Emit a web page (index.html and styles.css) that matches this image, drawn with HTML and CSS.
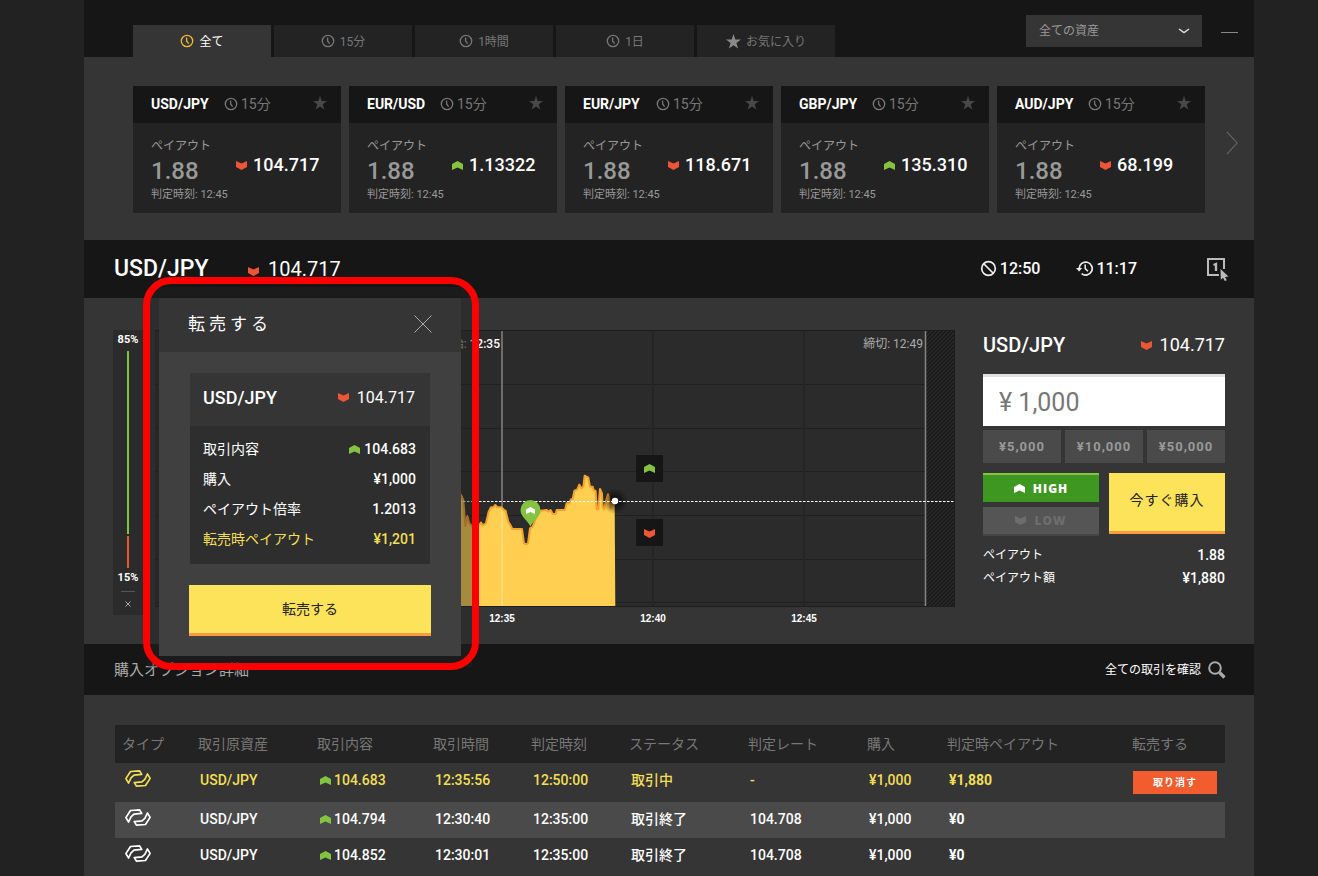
FILE: index.html
```html
<!DOCTYPE html>
<html lang="ja">
<head>
<meta charset="utf-8">
<meta name="viewport" content="width=device-width, initial-scale=1">
<title>USD/JPY 取引</title>
<link rel="stylesheet" href="styles.css">
</head>
<body>
<svg class="sprite" aria-hidden="true">
  <symbol id="up" viewBox="0 0 11 9"><path d="M0 3 5.5 0 11 3V9L5.5 6.5 0 9z"/></symbol>
  <symbol id="down" viewBox="0 0 11 9"><path d="M0 0 5.5 2.5 11 0V6L5.5 9 0 6z"/></symbol>
  <symbol id="clock" viewBox="0 0 14 14"><circle cx="7" cy="7" r="5.7" fill="none" stroke="currentColor" stroke-width="1.3"/><path d="M6.6 3.4V7L8.6 9.6" fill="none" stroke="currentColor" stroke-width="1.3"/></symbol>
  <symbol id="star" viewBox="0 0 14 14"><path d="M7 0 8.7 5.1H14L9.7 8.3 11.3 13.5 7 10.4 2.7 13.5 4.3 8.3 0 5.1H5.3z"/></symbol>
  <symbol id="option" viewBox="0 0 26 17"><path d="M3.600 13 .9 8.600 5.500 1.500 14.600.9 16.700 4.400 9 5.200 6 7.800zM22.400 4 25.100 8.400 20.500 15.500 11.400 16.100 9.300 12.600 17 11.800 20 9.200z" fill="none" stroke="currentColor" stroke-width="1.7" stroke-linejoin="round"/></symbol>
</svg>
<div class="page">
  <header class="topbar">
    <nav class="tabs">
      <button class="tab tab-active" type="button"><svg class="icon-clock"><use href="#clock"/></svg><span>全て</span></button>
      <button class="tab" type="button"><svg class="icon-clock"><use href="#clock"/></svg><span>15分</span></button>
      <button class="tab" type="button"><svg class="icon-clock"><use href="#clock"/></svg><span>1時間</span></button>
      <button class="tab" type="button"><svg class="icon-clock"><use href="#clock"/></svg><span>1日</span></button>
      <button class="tab" type="button"><svg class="icon-star"><use href="#star"/></svg><span>お気に入り</span></button>
    </nav>
    <div class="asset-filter">
      <select class="asset-select" aria-label="資産"><option>全ての資産</option></select>
      <svg class="asset-arrow" viewBox="0 0 12 6"><path d="M1 1 6 4.6 11 1" fill="none" stroke="#ddd" stroke-width="1.5"/></svg>
    </div>
    <button class="minimize" type="button" aria-label="最小化"></button>
  </header>

  <section class="strip">
    <article class="card">
      <div class="card-head"><h2 class="card-name">USD/JPY</h2><svg class="icon-clock"><use href="#clock"/></svg><span>15分</span><svg class="card-star"><use href="#star"/></svg></div>
      <div class="card-body"><div class="card-left"><p class="card-label">ペイアウト</p><p class="card-rate">1.88</p></div><p class="card-price"><svg class="mark down"><use href="#down"/></svg>104.717</p><p class="card-time">判定時刻: 12:45</p></div>
    </article>
    <article class="card">
      <div class="card-head"><h2 class="card-name">EUR/USD</h2><svg class="icon-clock"><use href="#clock"/></svg><span>15分</span><svg class="card-star"><use href="#star"/></svg></div>
      <div class="card-body"><div class="card-left"><p class="card-label">ペイアウト</p><p class="card-rate">1.88</p></div><p class="card-price"><svg class="mark up"><use href="#up"/></svg>1.13322</p><p class="card-time">判定時刻: 12:45</p></div>
    </article>
    <article class="card">
      <div class="card-head"><h2 class="card-name">EUR/JPY</h2><svg class="icon-clock"><use href="#clock"/></svg><span>15分</span><svg class="card-star"><use href="#star"/></svg></div>
      <div class="card-body"><div class="card-left"><p class="card-label">ペイアウト</p><p class="card-rate">1.88</p></div><p class="card-price"><svg class="mark down"><use href="#down"/></svg>118.671</p><p class="card-time">判定時刻: 12:45</p></div>
    </article>
    <article class="card">
      <div class="card-head"><h2 class="card-name">GBP/JPY</h2><svg class="icon-clock"><use href="#clock"/></svg><span>15分</span><svg class="card-star"><use href="#star"/></svg></div>
      <div class="card-body"><div class="card-left"><p class="card-label">ペイアウト</p><p class="card-rate">1.88</p></div><p class="card-price"><svg class="mark up"><use href="#up"/></svg>135.310</p><p class="card-time">判定時刻: 12:45</p></div>
    </article>
    <article class="card">
      <div class="card-head"><h2 class="card-name">AUD/JPY</h2><svg class="icon-clock"><use href="#clock"/></svg><span>15分</span><svg class="card-star"><use href="#star"/></svg></div>
      <div class="card-body"><div class="card-left"><p class="card-label">ペイアウト</p><p class="card-rate">1.88</p></div><p class="card-price"><svg class="mark down"><use href="#down"/></svg>68.199</p><p class="card-time">判定時刻: 12:45</p></div>
    </article>
    <button class="next" type="button" aria-label="次へ"><svg class="next-icon" viewBox="0 0 13 26"><path d="M1 1 12 13 1 25" fill="none" stroke="#666" stroke-width="1.2"/></svg></button>
  </section>

  <section class="titlebar">
    <h1 class="pair">USD/JPY</h1>
    <p class="pair-price"><svg class="mark down"><use href="#down"/></svg>104.717</p>
    <p class="time deadline"><svg class="time-icon" viewBox="0 0 17 17"><circle cx="8.5" cy="8.5" r="6.8" fill="none" stroke="#eee" stroke-width="1.7"/><path d="M4 4 13 13" stroke="#eee" stroke-width="1.7"/></svg>12:50</p>
    <p class="time"><svg class="time-icon" viewBox="0 0 17 17"><path d="M3.2 8.500A6.500 6.500 0 1 1 5.600 13.600" fill="none" stroke="#eee" stroke-width="1.7"/><path d="M0 8H6.2L3.1 11.6z" fill="#eee"/><path d="M9.2 4.6V8.600L12 11.200" fill="none" stroke="#eee" stroke-width="1.5"/></svg>11:17</p>
    <button class="oneclick" type="button" aria-label="ワンクリック"><svg class="oneclick-icon" viewBox="0 0 24 24"><path d="M18 12V2H2V18H13" fill="none" stroke="#bbb" stroke-width="2"/><path d="M7.500 8 10 7V14" fill="none" stroke="#bbb" stroke-width="2.300"/><path d="M14.500 12 22.500 19.500 19 20 20.800 23.200 18.800 24 17 20.800 14.800 22.800z" fill="#bbb"/></svg></button>
  </section>

  <section class="workspace">
    <aside class="sentiment">
      <span>85%</span><i class="bar-up"></i><i class="bar-down"></i><span>15%</span>
      <button class="sentiment-close" type="button" aria-label="閉じる"><svg class="sentiment-x" viewBox="0 0 6 6"><path d="M.5.5 5.5 5.5M5.5.5.5 5.5" stroke="#aaa"/></svg></button>
    </aside>
    <svg class="chart" viewBox="0 0 800 298" preserveAspectRatio="xMaxYMin slice" role="img" aria-label="USD/JPY チャート">
      <defs>
        <pattern id="hatch" width="4" height="4" patternUnits="userSpaceOnUse"><rect width="4" height="4" fill="#2a2a2a"/><path d="M-1 5 5-1M-1 1 1-1M3 5 5 3" stroke="#171717" stroke-width="1.3"/></pattern>
        <radialGradient id="glow"><stop offset="0" stop-color="#000" stop-opacity=".8"/><stop offset="1" stop-color="#000" stop-opacity="0"/></radialGradient>
      </defs>
      <rect width="800" height="277" fill="#2b2b2b"/>
      <path d="M0 54.500H800M0 98.500H800M0 141.500H800M0 185.500H800M0 229.500H800M0 272.500H800" stroke="#202020"/>
      <path d="M498 0V277M649 0V277" stroke="#252525" stroke-width="2"/>
      <rect x="771" width="29" height="277" fill="url(#hatch)"/>
      <path d="M0 .5H799.500V276.500H0" fill="none" stroke="#1d1d1d"/>
      <path d="M347 1V276" stroke="#858585" stroke-width="1.500"/>
      <g transform="translate(285 -20) scale(.3333)">
        <path d="M0 520 63 555 70 570 76 648 82 618 88 640 96 648 118 645 123 638 128 646 138 640 146 605 153 592 160 592 166 585 172 592 185 592 192 600 197 603 205 635 211 645 217 657 246 657 252 700 258 703 264 700 270 655 278 650 290 620 302 602 320 600 325 605 332 600 338 612 347 612 350 600 375 600 380 580 388 580 393 568 398 568 403 543 412 538 418 524 424 535 430 530 434 497 445 503 450 530 458 530 461 541 467 543 470 598 475 598 480 537 486 550 488 592 492 598 500 565 504 553 508 568 512 595 516 580 524 573 526 888H0z" fill="#fecf50"/>
        <path d="M0 520 63 555 70 570 76 648 82 618 88 640 96 648 118 645 123 638 128 646 138 640 146 605 153 592 160 592 166 585 172 592 185 592 192 600 197 603 205 635 211 645 217 657 246 657 252 700 258 703 264 700 270 655 278 650 290 620 302 602 320 600 325 605 332 600 338 612 347 612 350 600 375 600 380 580 388 580 393 568 398 568 403 543 412 538 418 524 424 535 430 530 434 497 445 503 450 530 458 530 461 541 467 543 470 598 475 598 480 537 486 550 488 592 492 598 500 565 504 553 508 568 512 595 516 580 524 573" fill="none" stroke="#f9a22b" stroke-width="6" stroke-linejoin="round"/>
      </g>
      <path d="M347 180V276" stroke="#ffde85" stroke-width="1.500"/>
      <path d="M770.500 1V276" stroke="#858585" stroke-width="1.500"/>
      <circle cx="460" cy="171" r="13" fill="url(#glow)"/>
      <path d="M20 171.500H800" stroke="#fff" stroke-dasharray="2.500 1.500"/>
      <circle cx="460" cy="171" r="3.200" fill="#fff"/>
      <path d="M375.500 196.500C372.500 190 365.500 187 365.500 180A10 10 0 0 1 385.500 180C385.500 187 378.500 190 375.500 196.500z" fill="#84c341"/>
      <path d="M371 179.500 375.500 177 380 179.500V184L375.500 182 371 184z" fill="#fff"/>
      <rect x="481" y="125" width="27" height="27" fill="#161616"/><use class="up" href="#up" x="489" y="134" width="11" height="9"/>
      <rect x="481" y="189" width="27" height="27" fill="#161616"/><use class="down" href="#down" x="489" y="199" width="11" height="9"/>
      <text class="chart-note" x="345" y="18" text-anchor="end">開始: <tspan class="chart-start">12:35</tspan></text>
      <text class="chart-note" x="768" y="18" text-anchor="end">締切: 12:49</text>
      <text class="tick" x="347" y="292">12:35</text><text class="tick" x="498" y="292">12:40</text><text class="tick" x="649" y="292">12:45</text>
    </svg>
    <form class="trade">
      <div class="trade-head"><h2 class="trade-name">USD/JPY</h2><p class="trade-price"><svg class="mark down"><use href="#down"/></svg>104.717</p></div>
      <input class="amount" type="text" value="¥ 1,000" aria-label="購入金額">
      <div class="quick"><button class="quick-btn" type="button">¥5,000</button><button class="quick-btn" type="button">¥10,000</button><button class="quick-btn" type="button">¥50,000</button></div>
      <div class="actions">
        <div class="direction">
          <button class="dir dir-high" type="button"><svg class="mark"><use href="#up"/></svg>HIGH</button>
          <button class="dir dir-low" type="button"><svg class="mark"><use href="#down"/></svg>LOW</button>
        </div>
        <button class="buy" type="button">今すぐ購入</button>
      </div>
      <dl class="payout"><div class="payout-row"><dt>ペイアウト</dt><dd>1.88</dd></div><div class="payout-row"><dt>ペイアウト額</dt><dd>¥1,880</dd></div></dl>
    </form>

    <div class="modal" role="dialog" aria-labelledby="resale-title">
      <div class="modal-head"><h2 class="modal-title" id="resale-title">転売する</h2><button class="modal-close" type="button" aria-label="閉じる"><svg class="modal-x" viewBox="0 0 18 18"><path d="M.5.5 17.500 17.500M17.500.5.5 17.500" stroke="#aaa"/></svg></button></div>
      <div class="modal-body">
        <div class="deal">
          <div class="deal-head"><h3 class="deal-name">USD/JPY</h3><p class="deal-price"><svg class="mark down"><use href="#down"/></svg>104.717</p></div>
          <dl class="deal-list">
            <div class="deal-row"><dt>取引内容</dt><dd><svg class="mark up"><use href="#up"/></svg>104.683</dd></div>
            <div class="deal-row"><dt>購入</dt><dd>¥1,000</dd></div>
            <div class="deal-row"><dt>ペイアウト倍率</dt><dd>1.2013</dd></div>
            <div class="deal-row deal-gold"><dt>転売時ペイアウト</dt><dd>¥1,201</dd></div>
          </dl>
        </div>
        <button class="resell" type="button">転売する</button>
      </div>
      <div class="highlight"></div>
    </div>
  </section>

  <section class="history-bar">
    <h2 class="history-title">購入オプション詳細</h2>
    <a class="history-link" href="#history">全ての取引を確認<svg class="search-icon" viewBox="0 0 18 18"><circle cx="7" cy="7" r="5.800" fill="none" stroke="#aaa" stroke-width="2"/><path d="M11.500 11.500 16.500 16.500" stroke="#aaa" stroke-width="3.200"/></svg></a>
  </section>

  <section class="history">
    <table class="trades" id="history">
      <colgroup><col class="w76"><col class="w119"><col class="w116"><col class="w98"><col class="w98"><col class="w119"><col class="w119"><col class="w80"><col class="w185"><col class="w100"></colgroup>
      <thead><tr><th>タイプ</th><th>取引原資産</th><th>取引内容</th><th>取引時間</th><th>判定時刻</th><th>ステータス</th><th>判定レート</th><th>購入</th><th>判定時ペイアウト</th><th>転売する</th></tr></thead>
      <tbody>
        <tr class="row-live"><td><svg class="type"><use href="#option"/></svg></td><td>USD/JPY</td><td><svg class="mark up"><use href="#up"/></svg>104.683</td><td>12:35:56</td><td>12:50:00</td><td>取引中</td><td>-</td><td>¥1,000</td><td class="strong">¥1,880</td><td><button class="cancel" type="button">取り消す</button></td></tr>
        <tr class="row-alt"><td><svg class="type"><use href="#option"/></svg></td><td>USD/JPY</td><td><svg class="mark up"><use href="#up"/></svg>104.794</td><td>12:30:40</td><td>12:35:00</td><td>取引終了</td><td>104.708</td><td>¥1,000</td><td class="strong">¥0</td><td></td></tr>
        <tr><td><svg class="type"><use href="#option"/></svg></td><td>USD/JPY</td><td><svg class="mark up"><use href="#up"/></svg>104.852</td><td>12:30:01</td><td>12:35:00</td><td>取引終了</td><td>104.708</td><td>¥1,000</td><td class="strong">¥0</td><td></td></tr>
      </tbody>
    </table>
  </section>
</div>
</body>
</html>
```
FILE: styles.css
```css
* { box-sizing: border-box; margin: 0; padding: 0; }
body { background: #222; color: #fff; font: 14px/20px Roboto, "Noto Sans CJK JP", sans-serif; }
button, input, select { font: inherit; color: inherit; border: 0; border-radius: 0; background: none; }
button { cursor: pointer; }
a { color: inherit; text-decoration: none; }
svg { display: block; flex: none; }
.sprite { display: none; }
.page { margin: 0 64px 0 84px; background: #353535; }
.mark { width: 11px; height: 9px; fill: currentColor; }
.up { fill: #84c341; }
.down { fill: #ee5535; }
.icon-clock { width: 14px; height: 14px; }
.icon-star { width: 15px; height: 15px; fill: #8a8a8a; }

.topbar { display: flex; align-items: flex-end; padding-left: 49px; height: 57px; background: #161616; }
.tabs { display: flex; gap: 3px; }
.tab { display: flex; align-items: center; justify-content: center; gap: 5px; width: 138px; height: 32px; background: #232323; color: #777; font-size: 12px; }
.tab span { padding-top: 2px; }
.tab-active { background: #353535; color: #fff; }
.tab-active .icon-clock { color: #f4b73b; }
.asset-filter { position: relative; margin: 0 19px 10px auto; }
.asset-select { appearance: none; display: block; width: 176px; height: 32px; padding: 0 13px; background: #353535; color: #999; font-size: 12px; }
.asset-arrow { position: absolute; right: 12px; top: 13px; width: 12px; height: 6px; }
.minimize { width: 17px; height: 1px; margin: 0 16px 24px 0; background: #888; }

.strip { display: flex; gap: 8px; padding: 29px 16px 27px 49px; }
.card { flex: 1; background: #232323; }
.card-head { display: flex; align-items: center; height: 37px; padding: 0 14px 1px 18px; background: #161616; color: #777; }
.card-head .icon-clock { margin-right: 3px; }
.card-name { width: 73px; color: #fff; font-size: 14px; font-weight: 700; }
.card-star { width: 14px; height: 14px; margin: 0 0 2px auto; fill: #484848; }
.card-body { display: grid; grid-template-columns: 85px 1fr; padding: 15px 0 11px 18px; }
.card-label { color: #999; font-size: 12px; line-height: 16px; }
.card-rate { padding-top: 3px; color: #999; font-size: 24px; font-weight: 500; line-height: 28px; }
.card-price { display: flex; align-items: center; gap: 6px; padding-top: 7px; font-size: 18px; font-weight: 500; }
.card-time { grid-column: 1 / -1; padding-top: 3px; color: #999; font-size: 11px; line-height: 14px; }
.next { width: 25px; padding: 0 0 13px 13px; }
.next-icon { width: 12px; height: 26px; }

.titlebar { display: flex; align-items: center; height: 58px; padding: 0 24px 0 30px; background: #161616; }
.pair { width: 134px; font-size: 23px; font-weight: 500; }
.pair-price { display: flex; align-items: center; gap: 9px; font-size: 20px; }
.pair-price .mark { margin-top: 4px; }
.time { display: flex; align-items: center; gap: 3px; margin-left: 36px; font-size: 16px; font-weight: 500; }
.deadline { margin-left: auto; }
.time-icon { width: 17px; height: 17px; margin-bottom: 2px; }
.oneclick { margin-left: 69px; }
.oneclick-icon { width: 24px; height: 24px; }

.workspace { position: relative; display: flex; padding: 32px 29px 16px; }
.sentiment { display: flex; flex-direction: column; align-items: center; flex: none; align-self: flex-start; width: 30px; height: 285px; margin-right: 12px; background: #2b2b2b; font-size: 11px; font-weight: 700; }
.bar-up, .bar-down { flex: 183; width: 2px; margin-top: 1px; background: #84c341; }
.bar-down { flex: 32; margin-top: 2px; background: #ee5535; }
.sentiment-close { width: 14px; height: 24px; margin-top: 3px; padding: 0 4px; border-top: 1px solid #555; }
.sentiment-x { width: 6px; height: 6px; }
.chart { flex: 1; min-width: 0; height: 298px; }
.chart-note { fill: #aaa; font-size: 12px; }
.chart-start { fill: #fff; font-weight: 500; }
.tick { fill: #fff; font: 700 10px "Liberation Sans", sans-serif; text-anchor: middle; }

.trade { flex: none; width: 242px; margin-left: 28px; }
.trade-head { display: flex; align-items: center; justify-content: space-between; height: 30px; margin-bottom: 14px; }
.trade-name { font-size: 20px; font-weight: 500; }
.trade-price { display: flex; align-items: center; gap: 8px; font-size: 18px; }
.amount { display: block; width: 100%; height: 52px; padding: 2px 16px 0; border-top: 3px solid #e0e0e0; background: #fff; color: #777; font-size: 25px; }
.quick { display: flex; gap: 4px; margin: 4px 0 10px; }
.quick-btn { flex: 1; height: 33px; background: #4a4a4a; color: #999; font-size: 13px; font-weight: 700; letter-spacing: 1px; }
.actions { display: grid; grid-template-columns: 1fr 1fr; gap: 10px; }
.direction { display: grid; gap: 5px; }
.dir { display: flex; align-items: center; justify-content: center; gap: 8px; height: 29px; font: 800 12px "Open Sans", sans-serif; letter-spacing: 1px; }
.dir-high { border-top: 2px solid #84c341; background: #3d9721; }
.dir-low { border-bottom: 2px solid #454545; background: #555; color: #6d6d6d; }
.buy { height: 61px; padding-bottom: 4px; border-bottom: 3px solid #fd9b41; background: #fde35a; color: #222; letter-spacing: 1px; }
.payout { padding-top: 8px; }
.payout-row { display: flex; justify-content: space-between; font-size: 12px; line-height: 23px; }
.payout-row dd { font-size: 14px; font-weight: 500; }

.modal { position: absolute; z-index: 1; top: 0; left: 75px; width: 302px; background: #404040; box-shadow: 0 0 0 11px rgba(34, 34, 34, .4); }
.modal-head { display: flex; align-items: center; justify-content: space-between; height: 54px; padding: 0 29px 2px; background: #353535; }
.modal-title { font-size: 17px; font-weight: 400; letter-spacing: 4px; }
.modal-x { width: 18px; height: 18px; }
.modal-body { padding: 21px 30px 20px; }
.deal { margin: 0 1px; background: #2e2e2e; }
.deal-head { display: flex; align-items: center; justify-content: space-between; height: 53px; padding: 0 15px 4px 13px; background: #353535; }
.deal-name { font-size: 18px; font-weight: 500; }
.deal-price { display: flex; align-items: center; gap: 8px; font-size: 16px; }
.deal-list { padding: 8px 14px 10px 13px; }
.deal-row { display: flex; justify-content: space-between; line-height: 30px; }
.deal-row dd { display: flex; align-items: center; gap: 4px; font-weight: 500; }
.deal-gold { color: #f3df55; }
.resell { display: block; width: 100%; height: 51px; margin-top: 21px; border-bottom: 3px solid #fd9b41; background: #fde35a; color: #222; }
.highlight { position: absolute; inset: -21px -18px -14px -16px; border: 7px solid #f00; border-radius: 28px; pointer-events: none; }

.history-bar { display: flex; align-items: center; justify-content: space-between; height: 51px; padding: 0 28px 0 30px; background: #161616; }
.history-title { color: #aaa; font-size: 15px; font-weight: 400; }
.history-link { display: flex; align-items: center; gap: 7px; font-size: 12px; }
.search-icon { width: 18px; height: 18px; }
.history { padding: 30px 29px 2px 31px; }
.trades { width: 100%; table-layout: fixed; border-collapse: collapse; text-align: left; white-space: nowrap; }
.w76 { width: 76px; } .w80 { width: 80px; } .w98 { width: 98px; } .w100 { width: 100px; }
.w116 { width: 116px; } .w119 { width: 119px; } .w185 { width: 185px; }
.trades th { height: 38px; padding-left: 7px; background: #232323; color: #777; font-weight: 400; }
.trades td { height: 36px; padding: 0 0 2px 9px; font-weight: 500; }
.trades .mark { display: inline-block; margin: 0 3px 0 1px; }
.type { width: 28px; height: 17px; margin-bottom: 4px; }
.trades .strong { font-weight: 700; }
.row-alt { background: #4a4a4a; }
.row-live { color: #f3df55; }
.trades .row-live td { height: 39px; padding-bottom: 5px; }
.trades .row-live td:last-child { padding: 0 0 0 8px; }
.cancel { display: block; width: 84px; height: 23px; background: #f15d2e; color: #fff; font-size: 10px; font-weight: 700; letter-spacing: 1px; }
```
